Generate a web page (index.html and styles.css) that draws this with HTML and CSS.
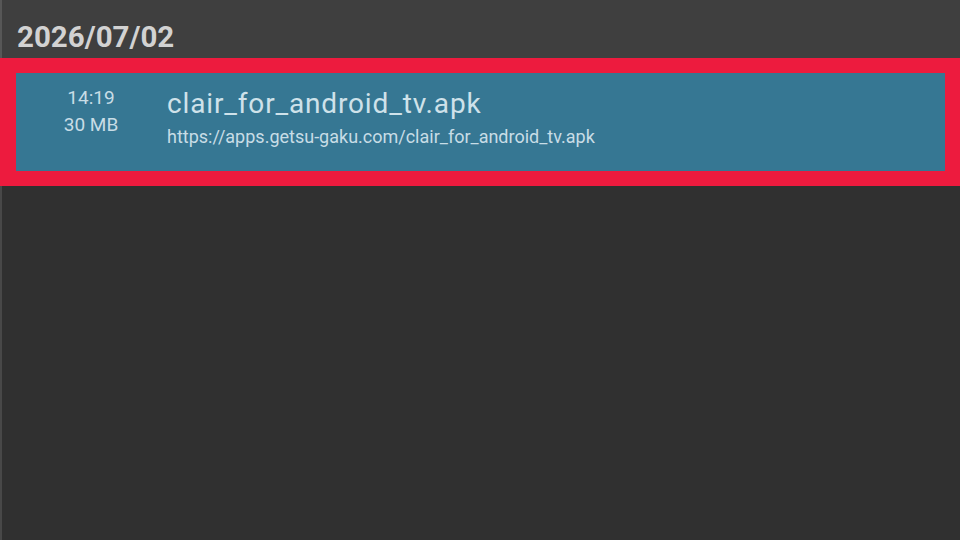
FILE: index.html
```html
<!DOCTYPE html>
<html>
<head>
<meta charset="utf-8">
<link rel="stylesheet" href="styles.css">
</head>
<body>
<div class="page">
  <div class="header"><span class="date">2026/07/02</span></div>
  <div class="item">
    <div class="item-inner">
      <div class="meta">
        <div class="time">14:19</div>
        <div class="size">30 MB</div>
      </div>
      <div class="info">
        <div class="name">clair_for_android_tv.apk</div>
        <div class="url">https://apps.getsu-gaku.com/clair_for_android_tv.apk</div>
      </div>
    </div>
  </div>
  <div class="rest"></div>
</div>
</body>
</html>
```
FILE: styles.css
```css
html, body {
  margin: 0;
  padding: 0;
}
body {
  width: 960px;
  height: 540px;
  overflow: hidden;
  background: #303030;
  font-family: Roboto, "Liberation Sans", sans-serif;
}
.page {
  display: flex;
  flex-direction: column;
  height: 540px;
}
.header {
  height: 58px;
  box-sizing: border-box;
  background: #3f3f3f;
  border-left: 2px solid #575757;
  padding-left: 15px;
  padding-top: 19px;
}
.date {
  display: block;
  font-size: 29.5px;
  line-height: 36px;
  font-weight: 700;
  color: #d2d2d2;
}
.item {
  background: #ed1b3e;
  padding: 15px 15px 15px 16px;
}
.item-inner {
  background: #367793;
  height: 98px;
  display: flex;
}
.meta {
  width: 150px;
  padding-top: 11px;
  text-align: center;
  font-size: 19px;
  line-height: 27px;
  color: #c8dde6;
}
.info {
  padding-top: 15px;
  padding-left: 1px;
}
.name {
  font-size: 28px;
  line-height: 32px;
  letter-spacing: 0.85px;
  color: #cfe2ea;
}
.url {
  margin-top: 6px;
  font-size: 18px;
  line-height: 22px;
  color: #c8dde6;
}
.rest {
  flex: 1;
  border-left: 2px solid #484848;
}
```
